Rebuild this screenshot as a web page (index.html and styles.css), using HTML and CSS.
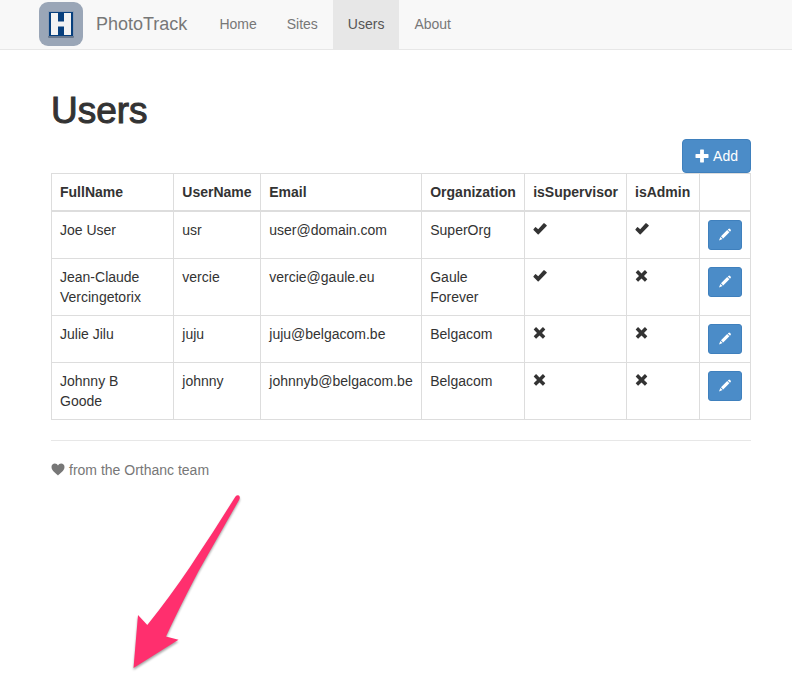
FILE: index.html
```
<!DOCTYPE html>
<html lang="en">
<head>
<meta charset="utf-8">
<title>PhotoTrack - Users</title>
<link rel="stylesheet" href="styles.css">
</head>
<body>
<svg class="symbols" aria-hidden="true">
  <symbol id="ok" viewBox="0 0 14 14"><path d="M.5 7.3 2.200 5.200Q2.500 4.900 2.900 5.200L5.200 7.200 10.600 1.300Q11 1 11.400 1.300L13.700 3.300Q14 3.600 13.700 4L5.700 12.200Q5.200 12.600 4.700 12.200L.5 8Q.2 7.600.5 7.300Z"/></symbol>
  <symbol id="remove" viewBox="0 0 14 14"><path d="M3.400 1.300 6.500 4.400 9.600 1.300Q9.900 1 10.200 1.300L12.100 3.200Q12.400 3.500 12.100 3.800L9 6.900 12.100 10Q12.400 10.300 12.100 10.600L10.200 12.500Q9.900 12.800 9.600 12.500L6.500 9.400 3.400 12.500Q3.100 12.800 2.800 12.500L.9 10.600Q.6 10.300.9 10L4 6.900.9 3.800Q.6 3.500.9 3.200L2.800 1.300Q3.100 1 3.400 1.300Z"/></symbol>
  <symbol id="pencil" viewBox="0 0 14 14"><path d="M10.400.9Q11.200.1 12 .9L12.600 1.500Q13.400 2.300 12.600 3.100L12 3.700 9.800 1.500ZM9.200 2.100 11.400 4.300 5.200 10.500 3 8.300ZM2.400 8.900 4.600 11.100 1 12.500Z"/></symbol>
  <symbol id="plus" viewBox="0 0 14 14"><path d="M5.500.5h3q.4 0 .4.4v4.200h4.200q.4 0 .4.4v3q0 .4-.4.4H8.900v4.200q0 .4-.4.4h-3q-.4 0-.4-.4V8.900H.9Q.5 8.900.5 8.500v-3Q.5 5.100.9 5.100H5.100V.9Q5.100.5 5.500.5Z"/></symbol>
  <symbol id="heart" viewBox="0 0 14 14"><path d="M7 12.500C5.500 10.500.5 7.800.5 3.900.5 1.800 2 .5 3.900.5 5.300.5 6.400 1.300 7 2.500 7.600 1.300 8.700.5 10.100.5 12 .5 13.500 1.800 13.500 3.900 13.500 7.800 8.500 10.500 7 12.500Z"/></symbol>
</svg>
<header class="navbar">
  <a class="logo" href="#" aria-label="PhotoTrack home">
    <svg viewBox="0 0 46 46" width="46" height="46" aria-hidden="true">
      <rect x="1" y="1" width="44" height="44" rx="9" fill="#9aa6b7"/>
      <rect x="10" y="11" width="26" height="26" rx="1" fill="#68788e"/>
      <rect x="10" y="10" width="26" height="25" fill="#8b9cb3"/>
      <rect x="11" y="11" width="24" height="24" fill="#073f7d"/>
      <path d="M13 12h7v8.500h6V12h7v22h-7v-8.500h-6V34h-7Z" fill="#f3f3f3"/>
    </svg>
  </a>
  <a class="brand" href="#">PhotoTrack</a>
  <nav class="menu">
    <a href="#">Home</a>
    <a href="#">Sites</a>
    <a class="active" href="#" aria-current="page">Users</a>
    <a href="#">About</a>
  </nav>
</header>
<main class="page">
  <h1>Users</h1>
  <div class="actions">
    <button class="btn" type="button"><svg class="icon"><use href="#plus"/></svg>Add</button>
  </div>
  <table class="users">
    <colgroup>
      <col class="full-name"><col class="user-name"><col class="email"><col class="organization"><col class="supervisor"><col class="admin"><col class="edit">
    </colgroup>
    <thead>
      <tr><th>FullName</th><th>UserName</th><th>Email</th><th>Organization</th><th>isSupervisor</th><th>isAdmin</th><th></th></tr>
    </thead>
    <tbody>
      <tr>
        <td>Joe User</td><td>usr</td><td>user@domain.com</td><td>SuperOrg</td>
        <td><svg class="icon" role="img" aria-label="yes"><use href="#ok"/></svg></td>
        <td><svg class="icon" role="img" aria-label="yes"><use href="#ok"/></svg></td>
        <td><button class="btn small" type="button" aria-label="Edit Joe User"><svg class="icon"><use href="#pencil"/></svg></button></td>
      </tr>
      <tr>
        <td>Jean-Claude Vercingetorix</td><td>vercie</td><td>vercie@gaule.eu</td><td>Gaule Forever</td>
        <td><svg class="icon" role="img" aria-label="yes"><use href="#ok"/></svg></td>
        <td><svg class="icon" role="img" aria-label="no"><use href="#remove"/></svg></td>
        <td><button class="btn small" type="button" aria-label="Edit Jean-Claude Vercingetorix"><svg class="icon"><use href="#pencil"/></svg></button></td>
      </tr>
      <tr>
        <td>Julie Jilu</td><td>juju</td><td>juju@belgacom.be</td><td>Belgacom</td>
        <td><svg class="icon" role="img" aria-label="no"><use href="#remove"/></svg></td>
        <td><svg class="icon" role="img" aria-label="no"><use href="#remove"/></svg></td>
        <td><button class="btn small" type="button" aria-label="Edit Julie Jilu"><svg class="icon"><use href="#pencil"/></svg></button></td>
      </tr>
      <tr>
        <td>Johnny B<br>Goode</td><td>johnny</td><td>johnnyb@belgacom.be</td><td>Belgacom</td>
        <td><svg class="icon" role="img" aria-label="no"><use href="#remove"/></svg></td>
        <td><svg class="icon" role="img" aria-label="no"><use href="#remove"/></svg></td>
        <td><button class="btn small" type="button" aria-label="Edit Johnny B Goode"><svg class="icon"><use href="#pencil"/></svg></button></td>
      </tr>
    </tbody>
  </table>
  <footer class="footer"><svg class="icon" aria-hidden="true"><use href="#heart"/></svg>from the Orthanc team</footer>
</main>
<svg class="arrow" viewBox="0 0 130 190" width="130" height="190" aria-hidden="true">
  <path d="M115.500 6.500Q117 4.500 119 5.500 120.500 7 119.300 9.500L91.700 58Q78 81 66.700 104 55 127 46 146.500L58.500 149.700 13.500 178 18 125 27.300 135Q49 108 70 77 83 57 93 42Z"/>
</svg>
</body>
</html>
```

FILE: styles.css
```
* {
  box-sizing: border-box;
}

body {
  margin: 0;
  background: #fff;
  color: #333;
  font: 14px/20px "Liberation Sans", Arial, sans-serif;
}

a {
  color: #777;
  text-decoration: none;
}

.symbols {
  position: absolute;
  width: 0;
  height: 0;
}

.icon {
  display: block;
  width: 14px;
  height: 14px;
  fill: currentColor;
}

.navbar {
  display: flex;
  height: 50px;
  padding-left: 38px;
  background: #f8f8f8;
  border-bottom: 1px solid #e7e7e7;
}

.logo {
  height: 46px;
  padding-top: 1px;
}

.brand {
  padding: 14px 17px 14px 12px;
  font-size: 18px;
}

.menu {
  display: flex;
}

.menu a {
  padding: 14px 15px;
}

.menu .active {
  height: 50px;
  background: #e7e7e7;
  color: #555;
}

.page {
  padding: 41px 41px 40px 51px;
}

h1 {
  margin: 0 0 8px;
  font-size: 37px;
  font-weight: normal;
  line-height: 40px;
  -webkit-text-stroke: 1px #333;
}

.actions {
  display: flex;
  justify-content: flex-end;
}

.btn {
  display: flex;
  align-items: center;
  gap: 4px;
  padding: 6px 12px;
  border: 1px solid #3f80bd;
  border-radius: 4px;
  background: #4b8cc8;
  color: #fff;
  font: inherit;
}

.btn.small {
  padding: 7px 9px;
  border-radius: 3px;
}

.users {
  width: 100%;
  border-collapse: collapse;
}

.full-name { width: 124px; }
.user-name { width: 87px; }
.email { width: 161px; }
.organization { width: 103px; }
.supervisor { width: 101px; }
.admin { width: 73px; }
.edit { width: 51px; }

.users th,
.users td {
  padding: 8px;
  border: 1px solid #ddd;
  text-align: left;
  vertical-align: top;
}

.users th {
  border-bottom-width: 2px;
}

.users td > .icon {
  margin-top: 2px;
}

.footer {
  display: flex;
  align-items: center;
  gap: 4px;
  margin-top: 20px;
  padding-top: 19px;
  border-top: 1px solid #e7e7e7;
  color: #777;
}

.arrow {
  position: absolute;
  top: 490px;
  left: 120px;
  fill: #ff2f6e;
  filter: drop-shadow(0 2px 1px rgba(0, 0, 0, 0.35));
}
```
